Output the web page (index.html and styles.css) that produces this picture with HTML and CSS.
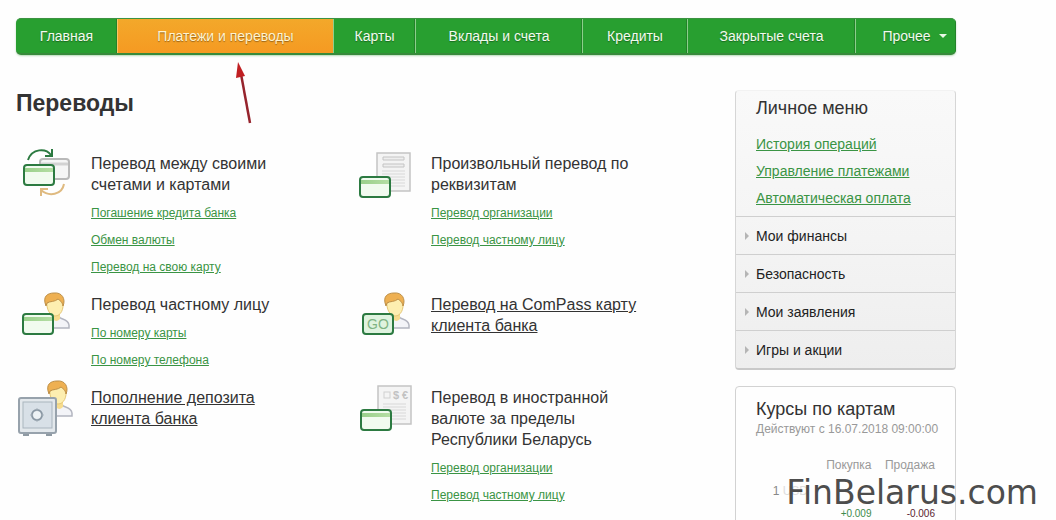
FILE: index.html
```html
<!DOCTYPE html>
<html lang="ru">
<head>
<meta charset="utf-8">
<title>Переводы</title>
<link rel="stylesheet" href="styles.css">
</head>
<body>
<svg class="defs" width="0" height="0" aria-hidden="true">
  <defs>
    <linearGradient id="band" x1="0" y1="0" x2="1" y2="0"><stop offset="0" stop-color="#9ad08b"/><stop offset="1" stop-color="#b5dea4"/></linearGradient>
    <g id="card">
      <rect x="1" y="1" width="30" height="20" rx="3" fill="#f1fbef"/>
      <rect x="2" y="4" width="28" height="4" fill="url(#band)"/>
      <rect x="1" y="1" width="30" height="20" rx="3" fill="none" stroke="#2c7a41" stroke-width="2"/>
    </g>
    <g id="person">
      <path d="M12 24 C12 28 3 26 1 33 V36 H27 V33 C26 26 17 28 17 24 Z" fill="#f3f4f8" stroke="#b3b5c0" stroke-width="1.5"/>
      <path d="M11 20 V27 Q14 31 18 27 V20 Z" fill="#f7dc8e"/>
      <path d="M5 9 C4 17 8 24 13 24 C19 24 22 17 21 9 Q16 7 14 5 Q10 9 5 9 Z" fill="#fdeeb0" stroke="#e5c777" stroke-width="1"/>
      <path d="M4 14 C0 4 6 1 12 1 C20 0 24 7 21 14 C20 9 18 9 16 7 C13 10 8 9 5 11 Z" fill="#eeb052" stroke="#bd9049" stroke-width="1"/>
    </g>
    <g id="sheet">
      <rect x="1" y="1" width="33" height="38" fill="#f4f4f4" stroke="#c4c4c4" stroke-width="1.5"/>
      <path d="M6 19H29M6 22H29M6 25H29M6 28H29M6 31H29M6 34H29" stroke="#d8d8d8"/>
    </g>
  </defs>
</svg>

<div class="page">
  <div class="nav-wrap">
    <nav class="nav">
      <a href="#">Главная</a>
      <a href="#" class="active">Платежи и переводы</a>
      <a href="#">Карты</a>
      <a href="#">Вклады и счета</a>
      <a href="#">Кредиты</a>
      <a href="#">Закрытые счета</a>
      <a href="#" class="more">Прочее <span class="caret"></span></a>
    </nav>
    <svg class="pointer" width="20" height="64" viewBox="0 0 20 64" aria-hidden="true">
      <path d="M5 12 L14 61" stroke="#96242d" stroke-width="2.5"/>
      <path d="M2 0 L9 14 L0 16 Z" fill="#c01f22"/>
    </svg>
  </div>

  <div class="columns">
    <main>
      <h1>Переводы</h1>
      <div class="services">
        <section class="service">
          <svg class="icon" width="60" height="60" viewBox="0 0 60 60" aria-hidden="true">
            <rect x="24" y="12" width="29" height="20" rx="3" fill="#f5f5f5" stroke="#b9b9b9" stroke-width="2"/>
            <path d="M25 17H52" stroke="#d2d2d2" stroke-width="3"/>
            <use href="#card" x="7" y="17"/>
            <path d="M12 13 C16 1 30 1 35 8 M36 2V9H29" fill="none" stroke="#2c7a41" stroke-width="2"/>
            <path d="M48 37 C46 48 33 50 25 43 M25 49V42H32" fill="none" stroke="#dfba80" stroke-width="2"/>
          </svg>
          <div class="text">
            <h2>Перевод между своими счетами и картами</h2>
            <ul><li><a href="#">Погашение кредита банка</a></li><li><a href="#">Обмен валюты</a></li><li><a href="#">Перевод на свою карту</a></li></ul>
          </div>
        </section>
        <section class="service">
          <svg class="icon" width="60" height="60" viewBox="0 0 60 60" aria-hidden="true">
            <use href="#sheet" x="20" y="5"/>
            <path d="M27 10H48V13H27ZM27 17H48V20H27Z" fill="#eee" stroke="#c4c4c4"/>
            <use href="#card" x="3" y="29"/>
          </svg>
          <div class="text">
            <h2>Произвольный перевод по реквизитам</h2>
            <ul><li><a href="#">Перевод организации</a></li><li><a href="#">Перевод частному лицу</a></li></ul>
          </div>
        </section>
        <section class="service">
          <svg class="icon" width="60" height="60" viewBox="0 0 60 60" aria-hidden="true">
            <use href="#person" x="26" y="4"/>
            <use href="#card" x="6" y="25"/>
          </svg>
          <div class="text">
            <h2>Перевод частному лицу</h2>
            <ul><li><a href="#">По номеру карты</a></li><li><a href="#">По номеру телефона</a></li></ul>
          </div>
        </section>
        <section class="service">
          <svg class="icon" width="60" height="60" viewBox="0 0 60 60" aria-hidden="true">
            <use href="#person" x="26" y="4"/>
            <rect x="7" y="26" width="30" height="20" rx="3" fill="#dff3df" stroke="#2c7a41" stroke-width="2"/>
            <text x="22" y="41" class="go">GO</text>
          </svg>
          <div class="text">
            <h2><a href="#">Перевод на ComPass карту клиента банка</a></h2>
          </div>
        </section>
        <section class="service">
          <svg class="icon" width="60" height="60" viewBox="0 0 60 60" aria-hidden="true">
            <use href="#person" x="29" y="-1"/>
            <path d="M7 52H13V55H7ZM30 52H36V55H30Z" fill="#8f9aa3"/>
            <rect x="3" y="17" width="37" height="35" rx="2" fill="#e3e8ec" stroke="#97a2ac" stroke-width="2"/>
            <rect x="7" y="21" width="29" height="26" fill="#d8e0e7" stroke="#aab5be"/>
            <circle cx="21" cy="34" r="5" fill="#edf2f5" stroke="#8997a3" stroke-width="2"/>
            <path d="M21 27V30M21 38V41M14 34H17M25 34H28" stroke="#a8b3bc"/>
          </svg>
          <div class="text">
            <h2><a href="#">Пополнение депозита клиента банка</a></h2>
          </div>
        </section>
        <section class="service">
          <svg class="icon" width="60" height="60" viewBox="0 0 60 60" aria-hidden="true">
            <use href="#sheet" x="21" y="4"/>
            <rect x="28" y="11" width="6" height="6" fill="none" stroke="#d0d0d0"/>
            <text x="37" y="18" class="currency">$</text><text x="46" y="18" class="currency">€</text>
            <use href="#card" x="4" y="28"/>
          </svg>
          <div class="text">
            <h2>Перевод в иностранной валюте за пределы Республики Беларусь</h2>
            <ul><li><a href="#">Перевод организации</a></li><li><a href="#">Перевод частному лицу</a></li></ul>
          </div>
        </section>
      </div>
    </main>

    <aside>
      <section class="menu">
        <h3>Личное меню</h3>
        <ul class="quick">
          <li><a href="#">История операций</a></li>
          <li><a href="#">Управление платежами</a></li>
          <li><a href="#">Автоматическая оплата</a></li>
        </ul>
        <button type="button">Мои финансы</button>
        <button type="button">Безопасность</button>
        <button type="button">Мои заявления</button>
        <button type="button">Игры и акции</button>
      </section>
      <section class="rates">
        <h3>Курсы по картам</h3>
        <p>Действуют с 16.07.2018 09:00:00</p>
        <table>
          <thead><tr><th></th><th>Покупка</th><th>Продажа</th></tr></thead>
          <tbody>
            <tr class="values"><td><span class="unit">1</span> USD</td><td></td><td></td></tr>
            <tr class="changes"><td></td><td class="up">+0.009</td><td class="down">-0.006</td></tr>
          </tbody>
        </table>
      </section>
    </aside>
  </div>
</div>
<div class="watermark">FinBelarus.com</div>
</body>
</html>
```
FILE: styles.css
```css
* { box-sizing: border-box; }
body {
  margin: 0;
  height: 100vh;
  overflow: hidden;
  position: relative;
  background: #fefefe;
  color: #333;
  font-family: "Liberation Sans", Arial, sans-serif;
  font-size: 14px;
}
h1, h2, h3, p, ul { margin: 0; padding: 0; }
ul { list-style: none; }
a { color: #3a9444; }
.defs { position: absolute; }
.page { padding: 18px 100px 0 16px; }

.nav-wrap { position: relative; }
.nav {
  display: grid;
  grid-template-columns: 101fr 216fr 82fr 167fr 105fr 168fr 101fr;
  height: 37px;
  border-radius: 5px;
  overflow: hidden;
  background: #289f30;
  border-top: 1px solid #3c9342;
  border-bottom: 2px solid #388a3b;
  box-shadow: 0 1px 2px #b5d9b6;
}
.nav a {
  display: flex;
  align-items: center;
  justify-content: center;
  color: #f2fbee;
  text-decoration: none;
  text-shadow: 0 1px 1px #1a6b20;
  border-left: 1px solid #8dce8c;
  box-shadow: inset -1px 0 #238229;
}
.nav a:first-child { border-left: 0; }
.nav .active {
  background: linear-gradient(#f3a82a, #f59a22);
  color: #fff3d0;
  text-shadow: 0 1px 1px #99651a;
  border-left-color: #f7c667;
  box-shadow: none;
}
.nav .more { gap: 8px; padding-left: 17px; }
.caret { border: 4px solid transparent; border-top-color: #e9f8e6; border-bottom: 0; }
.pointer { position: absolute; left: 220px; top: 44px; }

.columns { display: grid; grid-template-columns: 1fr 221px; align-items: start; }
main { padding-top: 35px; }
h1 { font-size: 23px; line-height: 26px; }
.services {
  display: grid;
  grid-template-columns: 340px 1fr;
  row-gap: 13px;
  margin-top: 37px;
}
.service { display: grid; grid-template-columns: 75px 220px; align-items: start; }
.icon { margin-top: -6px; overflow: visible; }
h2 { font-size: 16px; font-weight: 400; line-height: 21px; }
h2 a { color: #333; }
.text ul { margin-top: 5px; font-size: 12px; line-height: 27px; }
.go { font-size: 14px; fill: #7fb384; text-anchor: middle; }
.currency { font-size: 11px; font-weight: 700; fill: #c2c2c2; }

aside { padding-top: 35px; display: grid; gap: 16px; }
h3 { font-size: 18px; font-weight: 400; line-height: 22px; }
.menu {
  border: 1px solid #d6d6d6;
  border-top-color: #f2f2f2;
  border-bottom: 2px solid #c9c9c9;
  border-radius: 4px;
  background: linear-gradient(#f9f9f9, #f5f5f5 45%, #eee);
}
.menu h3 { padding: 6px 20px 0; }
.quick { padding: 12px 20px 4px; line-height: 27px; }
.menu button {
  display: flex;
  align-items: center;
  gap: 7px;
  width: 100%;
  height: 38px;
  padding: 0 9px;
  border: 0;
  border-top: 1px solid #cfcfcf;
  background: none;
  color: #222;
  font: inherit;
}
.menu button::before { content: ""; border: 4px solid transparent; border-left-color: #b5b5b5; border-right: 0; }
.rates { border: 1px solid #d2d2d2; border-radius: 4px; padding: 11px 16px 20px 20px; background: #fefefe; }
.rates p { font-size: 12px; line-height: 18px; color: #999; white-space: nowrap; }
table { width: 100%; margin-top: 18px; border-collapse: collapse; table-layout: fixed; font-size: 12px; color: #999; }
th, td { padding: 0 4px 0 0; font-weight: 400; text-align: right; height: 18px; }
th:first-child { width: 56px; }
.values td { height: 34px; color: #ddd; text-align: right; }
.unit { color: #888; }
.changes td { height: 12px; line-height: 12px; font-size: 10px; }
.changes .up { color: #3d8a4c; }
.changes .down { color: #5a2430; }
.watermark {
  position: absolute;
  right: 18px;
  bottom: 7px;
  color: #4d4d4d;
  font: 33px/40px "DejaVu Sans", Verdana, sans-serif;
}
```
